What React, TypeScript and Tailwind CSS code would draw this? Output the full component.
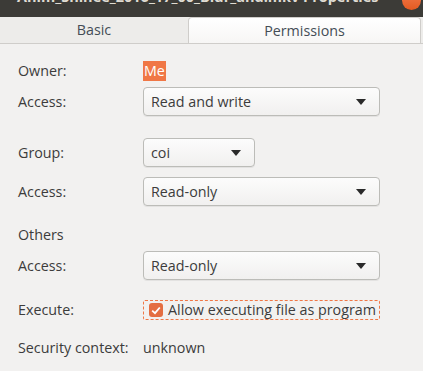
import { ReactNode } from "react";

function Combo({ value, className }: { value: string; className: string }) {
  return (
    <div
      className={`flex h-[29px] items-center justify-between rounded-[4px] border border-[#bcbcb8] bg-gradient-to-b from-[#fcfcfc] to-[#f1f0ef] pl-[7px] pr-[13px] shadow-[0_1px_0_rgba(0,0,0,0.06)] ${className}`}
    >
      <span>{value}</span>
      <svg width="10" height="6" viewBox="0 0 10 6">
        <path d="M0 0h10L5 6z" fill="#2a2a2a" />
      </svg>
    </div>
  );
}

function Row({ label, children, className = "" }: { label: string; children?: ReactNode; className?: string }) {
  return (
    <div className={`flex items-center ${className}`}>
      <div className="w-[125px] shrink-0">{label}</div>
      {children}
    </div>
  );
}

export default function App() {
  return (
    <div
      className="h-[371px] w-[423px] overflow-hidden bg-[#f2f1f0] text-[14.3px] leading-[20px] text-[#3c3c3c]"
      style={{ fontFamily: '"Open Sans", "Noto Sans", sans-serif' }}
    >
      {/* title bar, cut off at the top */}
      <div className="relative h-[17px] overflow-hidden bg-[#3c3b37]">
        <div className="absolute left-[17px] top-[-13px] whitespace-nowrap text-[14.5px] font-bold leading-[20px] text-[#dfdbd2]">
          Anim_Shinee_2016_17_00_Blur_and.mkv Properties
        </div>
        <div className="absolute left-[402px] top-[-9px] h-[19px] w-[19px] rounded-full bg-gradient-to-b from-[#f37b4a] to-[#e45a20]" />
      </div>

      {/* tabs */}
      <div className="flex h-[27px] border-b border-[#cfcdca] bg-[#edecea] text-[#444d56]">
        <div className="flex w-[188px] items-center justify-center">Basic</div>
        <div className="flex w-[233px] items-center justify-center rounded-t-[4px] border border-b-0 border-[#cfcdca] bg-gradient-to-b from-white to-[#f7f6f5]">
          Permissions
        </div>
      </div>

      <div className="flex flex-col pl-[18px] pt-[17px]">
        <Row label="Owner:" className="h-[19px]">
          <span className="bg-[#f07746] px-px text-white">Me</span>
        </Row>
        <Row label="Access:" className="mt-[7px]">
          <Combo value="Read and write" className="w-[237px]" />
        </Row>
        <Row label="Group:" className="mt-[22px]">
          <Combo value="coi" className="w-[112px]" />
        </Row>
        <Row label="Access:" className="mt-[10px]">
          <Combo value="Read-only" className="w-[237px]" />
        </Row>
        <div className="mt-[18px] h-[21px] leading-[21px]">Others</div>
        <Row label="Access:" className="mt-[6px]">
          <Combo value="Read-only" className="w-[237px]" />
        </Row>
        <Row label="Execute:" className="mt-[20px]">
          <div className="flex h-[20px] w-[237px] items-center gap-[5px] rounded-[2px] border border-dashed border-[#f07746] pl-[5px]">
            <div className="flex h-[14px] w-[14px] items-center justify-center rounded-[3px] bg-[#e46e42]">
              <svg width="10" height="9" viewBox="0 0 10 9">
                <path d="M1.2 4.6 4 7.2 8.8 1.5" stroke="white" strokeWidth="1.8" fill="none" />
              </svg>
            </div>
            <span>Allow executing file as program</span>
          </div>
        </Row>
        <Row label="Security context:" className="mt-[18px]">
          <span>unknown</span>
        </Row>
      </div>
    </div>
  );
}
